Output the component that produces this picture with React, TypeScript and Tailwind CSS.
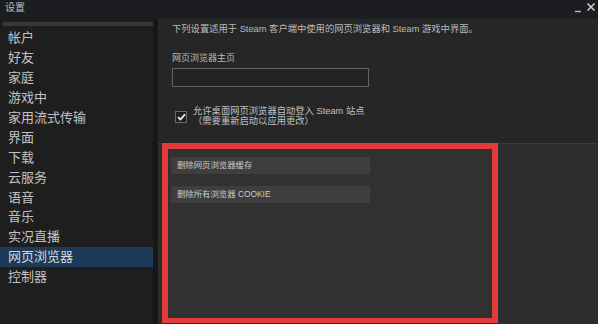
import React from 'react';

const sections = [
  '帐户',
  '好友',
  '家庭',
  '游戏中',
  '家用流式传输',
  '界面',
  '下载',
  '云服务',
  '语音',
  '音乐',
  '实况直播',
  '网页浏览器',
  '控制器',
];

const active = '网页浏览器';

export default function App() {
  return (
    <div className="w-[598px] h-[324px] flex flex-col overflow-hidden bg-[#262626] text-[#c4c4c4] font-['Liberation_Sans','Noto_Sans_CJK_SC',sans-serif]">
      {/* title bar */}
      <div className="h-[19px] shrink-0 flex items-start justify-between bg-[#1c1d20]">
        <span className="pl-[5px] pt-[2px] text-[10px] leading-[12px] text-[#bdbdbd]">设置</span>
        <div className="flex items-start pr-[2px] pt-[2px] gap-[4px]">
          <svg width="8" height="10" viewBox="0 0 8 10" className="mt-[1px]">
            <path d="M1 8.5H7" stroke="#b9b9b9" strokeWidth="1.4" />
          </svg>
          <svg width="10" height="10" viewBox="0 0 10 10">
            <path d="M1.5 1.5L8.5 8.5M8.5 1.5L1.5 8.5" stroke="#d0d0d0" strokeWidth="1.5" />
          </svg>
        </div>
      </div>

      <div className="flex-1 flex min-h-0">
        {/* sidebar */}
        <div className="w-[153px] shrink-0 bg-[#1e1e1f] pt-[3px]">
          <div className="ml-[3px] h-[4px] bg-[#38383a]" />
          <div className="mt-[2px] flex flex-col">
            {sections.map((s) => (
              <div
                key={s}
                className={
                  'h-[19.9px] flex items-center pl-[8px] text-[13px] leading-none ' +
                  (s === active ? 'bg-[#1d3a58] text-[#d6d6d6]' : 'text-[#c2c2c2]')
                }
              >
                {s}
              </div>
            ))}
          </div>
        </div>
        <div className="w-[5px] shrink-0 bg-[#171717]" />

        {/* main */}
        <div className="flex-1 flex flex-col min-w-0">
          <div className="h-[124px] shrink-0 pl-[14px] pt-[4px] text-[#b9b9b9]">
            <p className="text-[9.3px] leading-[12px] whitespace-nowrap">
              下列设置适用于 Steam 客户端中使用的网页浏览器和 Steam 游戏中界面。
            </p>
            <p className="mt-[16.5px] text-[9px] leading-[12px]">网页浏览器主页</p>
            <div className="mt-[4.5px] w-[197px] h-[19px] border border-[#626262] bg-[#232323]" />
            <div className="mt-[19px] flex items-start gap-[6px] pl-[3px]">
              <div className="mt-[5px] w-[12px] h-[12px] border border-[#6a6a6a] bg-[#1f1f1f] flex items-center justify-center">
                <svg width="9" height="8" viewBox="0 0 9 8">
                  <path d="M1 4.2L3.4 6.5L8 1.3" stroke="#f2f2f2" strokeWidth="1.8" fill="none" />
                </svg>
              </div>
              <div className="text-[9.3px] leading-[10px] text-[#c0c0c0]">
                <p>允许桌面网页浏览器自动登入 Steam 站点</p>
                <p>（需要重新启动以应用更改）</p>
              </div>
            </div>
          </div>

          <div className="flex-1 flex bg-[#2d2d2d] border-t border-[#3a3a3a] pl-[4px]">
            <div className="w-[336px] h-[180px] -mt-px border-[6px] border-b-[5px] border-[#e23b3c] bg-[#313131] pl-[3px] pt-[8px] flex flex-col gap-[12px]">
              <button className="w-[199px] h-[17px] bg-[#3e3e3e] text-left pl-[6px] text-[8.4px] leading-none text-[#cacaca]">
                删除网页浏览器缓存
              </button>
              <button className="w-[199px] h-[17px] bg-[#3e3e3e] text-left pl-[6px] text-[8.4px] leading-none text-[#cacaca]">
                删除所有浏览器 COOKIE
              </button>
            </div>
          </div>
        </div>
      </div>
    </div>
  );
}
